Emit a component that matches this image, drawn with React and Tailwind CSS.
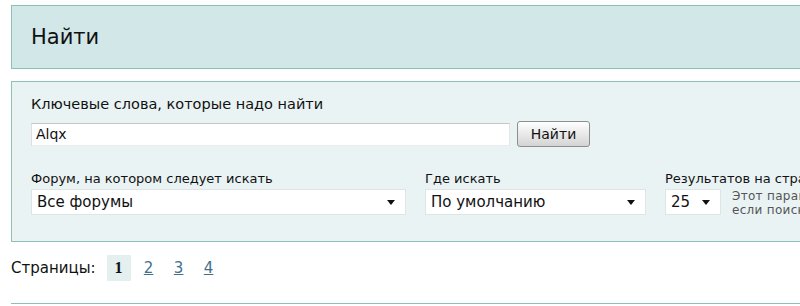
import React from "react";

function Arrow() {
  return (
    <svg width="8" height="5" viewBox="0 0 8 5" className="shrink-0">
      <path d="M0 0h8L4 5z" fill="#111" />
    </svg>
  );
}

function Select({ value, width }) {
  return (
    <div
      className={`flex h-[26px] items-center justify-between border border-[#dfe5e5] bg-white pl-[5px] pr-[10px] ${width}`}
    >
      <span className="text-[15px] text-[#111]">{value}</span>
      <Arrow />
    </div>
  );
}

const pages = ["1", "2", "3", "4"];

export default function App() {
  return (
    <div className="h-[306px] w-[800px] overflow-hidden bg-white font-['DejaVu_Sans',Verdana,sans-serif] text-[#111]">
      {/* Header */}

      <div className="pl-[11px] pt-[5px]">
        <div className="flex h-[64px] w-[820px] items-center border border-[#8dc0b6] bg-[#d1e7e8] pl-[19px]">
          <h1 className="text-[21px] leading-none">Найти</h1>
        </div>
      </div>

      {/* Search form */}

      <div className="ml-[11px] mt-[12px] h-[161px] w-[820px] border border-[#8dc0b6] bg-[#e9f3f4] pl-[19px] pt-[14px]">
        <label className="block text-[14.5px] leading-[17px]">
          Ключевые слова, которые надо найти
        </label>

        <div className="mt-[8px] flex items-center gap-[7px]">
          <div className="flex h-[23px] w-[479px] items-center border border-t-[#c6c6c6] border-l-[#dedede] border-r-[#e6e6e6] border-b-[#ececec] bg-white pl-[4px] text-[14px]">
            Alqx
          </div>

          <button className="h-[26px] w-[73px] rounded-[3px] border border-[#8e8e8e] bg-gradient-to-b from-white to-[#d4d4d4] text-[14px] text-[#111]">
            Найти
          </button>
        </div>

        <div className="mt-[24px] flex gap-[19px]">
          <div>
            <p className="text-[13px] leading-[16px]">
              Форум, на котором следует искать
            </p>
            <div className="mt-[2px]">
              <Select value="Все форумы" width="w-[375px]" />
            </div>
          </div>

          <div>
            <p className="text-[13px] leading-[16px]">Где искать</p>
            <div className="mt-[2px]">
              <Select value="По умолчанию" width="w-[221px]" />
            </div>
          </div>

          <div>
            <p className="whitespace-nowrap text-[13px] leading-[16px]">
              Результатов на странице
            </p>
            <div className="mt-[2px] flex items-start gap-[11px]">
              <Select value="25" width="w-[56px]" />
              <p className="whitespace-nowrap text-[12px] leading-[14px] tracking-[0.3px] text-[#555]">
                Этот параметр будет проигнорирован,
                <br />
                если поиск ведётся по сообщениям
              </p>
            </div>
          </div>
        </div>
      </div>

      {/* Pagination */}

      <div className="ml-[11px] mt-[13px] flex items-center gap-[11px]">
        <span className="text-[15px]">Страницы:</span>

        <div className="flex gap-[6px]">
          {pages.map((page) =>
            page === "1" ? (
              <span
                key={page}
                className="flex h-[26px] w-[24px] items-center justify-center bg-[#e4eff0] font-['Liberation_Serif',serif] text-[16px] font-bold"
              >
                {page}
              </span>
            ) : (
              <a
                key={page}
                href="#"
                className="flex h-[26px] w-[24px] items-center justify-center text-[15px] text-[#3f6f8c] underline"
              >
                {page}
              </a>
            )
          )}
        </div>
      </div>

      <div className="ml-[11px] mt-[22px] h-[20px] w-[820px] border-t border-[#8dc0b6]" />
    </div>
  );
}
